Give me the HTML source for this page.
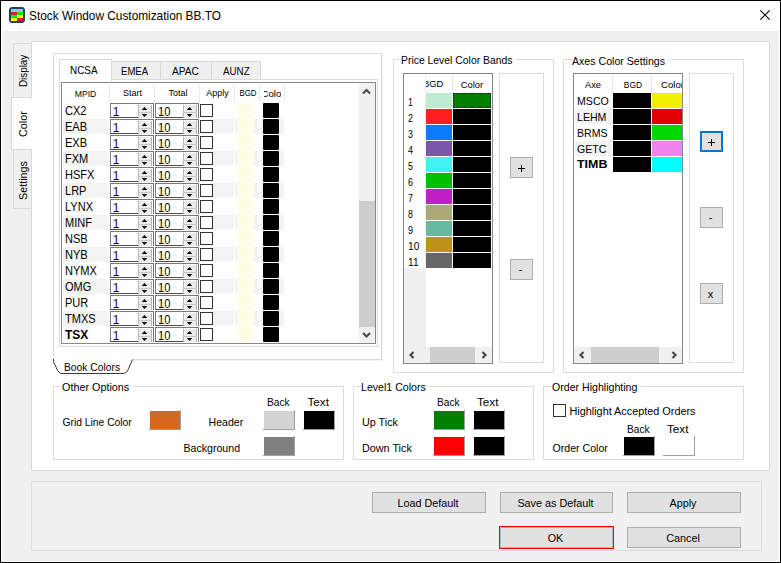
<!DOCTYPE html><html><head><meta charset="utf-8"><style>
*{margin:0;padding:0;box-sizing:border-box}
html,body{width:781px;height:563px;overflow:hidden}
body{position:relative;background:#f0f0f0;font-family:"Liberation Sans",sans-serif;color:#000}
.a{position:absolute}
.t{position:absolute;white-space:nowrap;line-height:1}
svg{position:absolute;left:0;top:0}
</style></head><body>
<div class="a" style="left:1px;top:1px;width:779px;height:30px;background:#fff"></div>
<div class="a" style="left:0px;top:0px;width:781px;height:563px;border:1px solid #000"></div>
<div class="a" style="left:1px;top:31px;width:1px;height:531px;background:#fff"></div>
<div class="a" style="left:779px;top:31px;width:1px;height:531px;background:#fff"></div>
<div class="a" style="left:1px;top:561px;width:779px;height:1px;background:#fff"></div>
<svg width="30" height="30" style="left:0;top:0">
<rect x="9.5" y="7.5" width="15" height="15" rx="2.5" fill="#223f5f" stroke="#223f5f"/>
<rect x="11" y="9" width="12" height="3" fill="#84cde6"/>
<rect x="11" y="12" width="6" height="3" fill="#d42020"/><rect x="17" y="12" width="6" height="3" fill="#00f000"/>
<rect x="11" y="15" width="6" height="3" fill="#00f000"/><rect x="17" y="15" width="6" height="3" fill="#ffff00"/>
<rect x="11" y="18" width="6" height="3" fill="#ffff00"/><rect x="17" y="18" width="6" height="3" fill="#d42020"/>
</svg>
<div class="t" style="left:28.8px;top:9.93px;font-size:12.6px;;transform-origin:0 0;transform:scaleX(0.94)">Stock Window Customization BB.TO</div>
<svg width="781" height="40" style="left:0;top:0"><path d="M760.3 10.3 L769.7 19.7 M769.7 10.3 L760.3 19.7" stroke="#000" stroke-width="1.05"/></svg>
<div class="a" style="left:31px;top:41px;width:739px;height:430px;background:#fff;border:1px solid #d9d9d9"></div>
<div class="a" style="left:13px;top:43px;width:19px;height:55px;background:#f0f0f0;border:1px solid #d9d9d9"></div>
<div class="a" style="left:13px;top:149px;width:19px;height:60px;background:#f0f0f0;border:1px solid #d9d9d9"></div>
<div class="a" style="left:11px;top:97px;width:21px;height:53px;background:#fff;border:1px solid #d9d9d9;border-right:none"></div>
<div class="a" style="left:31px;top:98px;width:1px;height:51px;background:#fff"></div>
<div class="t" style="left:17.83px;top:87.3px;font-size:10.8px;transform-origin:0 0;transform:rotate(-90deg) scaleX(0.91)">Display</div>
<div class="t" style="left:17.83px;top:137px;font-size:10.8px;transform-origin:0 0;transform:rotate(-90deg) scaleX(1)">Color</div>
<div class="t" style="left:17.83px;top:200px;font-size:10.8px;transform-origin:0 0;transform:rotate(-90deg) scaleX(1.0)">Settings</div>
<div class="a" style="left:53px;top:53px;width:329px;height:307px;background:#fff;border:1px solid #d9d9d9"></div>
<div class="a" style="left:382px;top:54px;width:1px;height:307px;background:#f4f4f4"></div>
<div class="a" style="left:54px;top:360px;width:329px;height:1px;background:#f4f4f4"></div>
<div class="a" style="left:54px;top:359px;width:78px;height:3px;background:#fff"></div>
<svg width="781" height="563" style="left:0;top:0"><path d="M53.5 359 L53.5 361.5 L57.5 370.5 Q59 373.5 62 373.5 L123.5 373.5 Q126.5 373.5 128 370 L132.5 359.5" fill="#fff" stroke="#3a3a3a" stroke-width="1"/></svg>
<div class="t" style="left:64px;top:363.28px;font-size:10.3px;">Book Colors</div>
<div class="a" style="left:59px;top:79px;width:319px;height:268px;background:#fff;border:1px solid #d9d9d9"></div>
<div class="a" style="left:111px;top:61px;width:50px;height:19px;background:#f0f0f0;border:1px solid #d9d9d9"></div>
<div class="a" style="left:160px;top:61px;width:52px;height:19px;background:#f0f0f0;border:1px solid #d9d9d9"></div>
<div class="a" style="left:211px;top:61px;width:50px;height:19px;background:#f0f0f0;border:1px solid #d9d9d9"></div>
<div class="a" style="left:59px;top:59px;width:53px;height:22px;background:#fff;border:1px solid #d9d9d9;border-bottom:none"></div>
<div class="t" style="left:70px;top:64.69px;font-size:11px;;transform-origin:0 0;transform:scaleX(0.9)">NCSA</div>
<div class="t" style="left:121px;top:65.69px;font-size:11px;;transform-origin:0 0;transform:scaleX(0.87)">EMEA</div>
<div class="t" style="left:172px;top:65.69px;font-size:11px;;transform-origin:0 0;transform:scaleX(0.92)">APAC</div>
<div class="t" style="left:223px;top:65.69px;font-size:11px;;transform-origin:0 0;transform:scaleX(0.89)">AUNZ</div>
<div class="a" style="left:61px;top:82px;width:315px;height:262px;background:#fff;border:1px solid #828790"></div>
<div class="a" style="left:109px;top:84px;width:1px;height:18px;background:#e8e8e8"></div>
<div class="a" style="left:154px;top:84px;width:1px;height:18px;background:#e8e8e8"></div>
<div class="a" style="left:199px;top:84px;width:1px;height:18px;background:#e8e8e8"></div>
<div class="a" style="left:234px;top:84px;width:1px;height:18px;background:#e8e8e8"></div>
<div class="a" style="left:259px;top:84px;width:1px;height:18px;background:#e8e8e8"></div>
<div class="a" style="left:284px;top:84px;width:1px;height:18px;background:#e8e8e8"></div>
<div class="t" style="left:-14.5px;width:200px;text-align:center;top:89.72px;font-size:8.6px;">MPID</div>
<div class="t" style="left:32.5px;width:200px;text-align:center;top:89.38px;font-size:9px;">Start</div>
<div class="t" style="left:78px;width:200px;text-align:center;top:89.38px;font-size:9px;">Total</div>
<div class="t" style="left:117.5px;width:200px;text-align:center;top:89.38px;font-size:9px;">Apply</div>
<div class="t" style="left:147.5px;width:200px;text-align:center;top:89.38px;font-size:9px;transform:scaleX(0.88)">BGD</div>
<div class="a" style="left:264px;top:84px;width:17px;height:17px;overflow:hidden"><div class="t" style="left:-13px;width:44px;text-align:center;top:4.8px;font-size:9.6px">Color</div></div>
<div class="t" style="left:65px;top:104.84px;font-size:12px;;transform-origin:0 0;transform:scaleX(0.92)">CX2</div>
<div class="a" style="left:110px;top:103px;width:44px;height:15px;background:#fff;border:1px solid #7a7a7a;border-bottom:none"></div>
<div class="a" style="left:110px;top:117px;width:28px;height:1px;background:#4a4a4a"></div>
<div class="a" style="left:138px;top:105px;width:14px;height:13px;background:#ebebeb;border-left:1px solid #b5b5b5;border-right:1px solid #b5b5b5"></div>
<div class="a" style="left:138px;top:112px;width:14px;height:1px;background:#c6c6c6"></div>
<svg width="15" height="15" style="left:138px;top:103px"><path d="M3.8 7 L6.5 3.9 L9.2 7Z M3.8 11 L6.5 14.1 L9.2 11Z" fill="#000"/></svg>
<div class="t" style="left:113px;top:105.84px;font-size:12px;;transform-origin:0 0;transform:scaleX(0.93)">1</div>
<div class="a" style="left:155px;top:103px;width:44px;height:15px;background:#fff;border:1px solid #7a7a7a;border-bottom:none"></div>
<div class="a" style="left:155px;top:117px;width:28px;height:1px;background:#4a4a4a"></div>
<div class="a" style="left:183px;top:105px;width:14px;height:13px;background:#ebebeb;border-left:1px solid #b5b5b5;border-right:1px solid #b5b5b5"></div>
<div class="a" style="left:183px;top:112px;width:14px;height:1px;background:#c6c6c6"></div>
<svg width="15" height="15" style="left:183px;top:103px"><path d="M3.8 7 L6.5 3.9 L9.2 7Z M3.8 11 L6.5 14.1 L9.2 11Z" fill="#000"/></svg>
<div class="t" style="left:158px;top:105.84px;font-size:12px;;transform-origin:0 0;transform:scaleX(0.93)">10</div>
<div class="a" style="left:200px;top:104px;width:13px;height:13px;background:#fff;border:1px solid #333"></div>
<div class="a" style="left:238px;top:103px;width:16px;height:15px;background:#fffde6"></div>
<div class="a" style="left:263px;top:103px;width:16px;height:15px;background:#000;border-radius:1px"></div>
<div class="a" style="left:63px;top:119px;width:46px;height:15px;background:#f3f3f3"></div>
<div class="a" style="left:213px;top:119px;width:21px;height:15px;background:#f3f3f3"></div>
<div class="a" style="left:235px;top:119px;width:24px;height:15px;background:#f3f3f3"></div>
<div class="a" style="left:260px;top:119px;width:24px;height:15px;background:#f3f3f3"></div>
<div class="t" style="left:65px;top:120.84px;font-size:12px;;transform-origin:0 0;transform:scaleX(0.92)">EAB</div>
<div class="a" style="left:110px;top:119px;width:44px;height:15px;background:#fff;border:1px solid #7a7a7a;border-bottom:none"></div>
<div class="a" style="left:110px;top:133px;width:28px;height:1px;background:#4a4a4a"></div>
<div class="a" style="left:138px;top:121px;width:14px;height:13px;background:#ebebeb;border-left:1px solid #b5b5b5;border-right:1px solid #b5b5b5"></div>
<div class="a" style="left:138px;top:128px;width:14px;height:1px;background:#c6c6c6"></div>
<svg width="15" height="15" style="left:138px;top:119px"><path d="M3.8 7 L6.5 3.9 L9.2 7Z M3.8 11 L6.5 14.1 L9.2 11Z" fill="#000"/></svg>
<div class="t" style="left:113px;top:121.84px;font-size:12px;;transform-origin:0 0;transform:scaleX(0.93)">1</div>
<div class="a" style="left:155px;top:119px;width:44px;height:15px;background:#fff;border:1px solid #7a7a7a;border-bottom:none"></div>
<div class="a" style="left:155px;top:133px;width:28px;height:1px;background:#4a4a4a"></div>
<div class="a" style="left:183px;top:121px;width:14px;height:13px;background:#ebebeb;border-left:1px solid #b5b5b5;border-right:1px solid #b5b5b5"></div>
<div class="a" style="left:183px;top:128px;width:14px;height:1px;background:#c6c6c6"></div>
<svg width="15" height="15" style="left:183px;top:119px"><path d="M3.8 7 L6.5 3.9 L9.2 7Z M3.8 11 L6.5 14.1 L9.2 11Z" fill="#000"/></svg>
<div class="t" style="left:158px;top:121.84px;font-size:12px;;transform-origin:0 0;transform:scaleX(0.93)">10</div>
<div class="a" style="left:200px;top:120px;width:13px;height:13px;background:#fff;border:1px solid #333"></div>
<div class="a" style="left:238px;top:119px;width:16px;height:15px;background:#fffde6"></div>
<div class="a" style="left:263px;top:119px;width:16px;height:15px;background:#000;border-radius:1px"></div>
<div class="t" style="left:65px;top:136.84px;font-size:12px;;transform-origin:0 0;transform:scaleX(0.92)">EXB</div>
<div class="a" style="left:110px;top:135px;width:44px;height:15px;background:#fff;border:1px solid #7a7a7a;border-bottom:none"></div>
<div class="a" style="left:110px;top:149px;width:28px;height:1px;background:#4a4a4a"></div>
<div class="a" style="left:138px;top:137px;width:14px;height:13px;background:#ebebeb;border-left:1px solid #b5b5b5;border-right:1px solid #b5b5b5"></div>
<div class="a" style="left:138px;top:144px;width:14px;height:1px;background:#c6c6c6"></div>
<svg width="15" height="15" style="left:138px;top:135px"><path d="M3.8 7 L6.5 3.9 L9.2 7Z M3.8 11 L6.5 14.1 L9.2 11Z" fill="#000"/></svg>
<div class="t" style="left:113px;top:137.84px;font-size:12px;;transform-origin:0 0;transform:scaleX(0.93)">1</div>
<div class="a" style="left:155px;top:135px;width:44px;height:15px;background:#fff;border:1px solid #7a7a7a;border-bottom:none"></div>
<div class="a" style="left:155px;top:149px;width:28px;height:1px;background:#4a4a4a"></div>
<div class="a" style="left:183px;top:137px;width:14px;height:13px;background:#ebebeb;border-left:1px solid #b5b5b5;border-right:1px solid #b5b5b5"></div>
<div class="a" style="left:183px;top:144px;width:14px;height:1px;background:#c6c6c6"></div>
<svg width="15" height="15" style="left:183px;top:135px"><path d="M3.8 7 L6.5 3.9 L9.2 7Z M3.8 11 L6.5 14.1 L9.2 11Z" fill="#000"/></svg>
<div class="t" style="left:158px;top:137.84px;font-size:12px;;transform-origin:0 0;transform:scaleX(0.93)">10</div>
<div class="a" style="left:200px;top:136px;width:13px;height:13px;background:#fff;border:1px solid #333"></div>
<div class="a" style="left:238px;top:135px;width:16px;height:15px;background:#fffde6"></div>
<div class="a" style="left:263px;top:135px;width:16px;height:15px;background:#000;border-radius:1px"></div>
<div class="a" style="left:63px;top:151px;width:46px;height:15px;background:#f3f3f3"></div>
<div class="a" style="left:213px;top:151px;width:21px;height:15px;background:#f3f3f3"></div>
<div class="a" style="left:235px;top:151px;width:24px;height:15px;background:#f3f3f3"></div>
<div class="a" style="left:260px;top:151px;width:24px;height:15px;background:#f3f3f3"></div>
<div class="t" style="left:65px;top:152.84px;font-size:12px;;transform-origin:0 0;transform:scaleX(0.92)">FXM</div>
<div class="a" style="left:110px;top:151px;width:44px;height:15px;background:#fff;border:1px solid #7a7a7a;border-bottom:none"></div>
<div class="a" style="left:110px;top:165px;width:28px;height:1px;background:#4a4a4a"></div>
<div class="a" style="left:138px;top:153px;width:14px;height:13px;background:#ebebeb;border-left:1px solid #b5b5b5;border-right:1px solid #b5b5b5"></div>
<div class="a" style="left:138px;top:160px;width:14px;height:1px;background:#c6c6c6"></div>
<svg width="15" height="15" style="left:138px;top:151px"><path d="M3.8 7 L6.5 3.9 L9.2 7Z M3.8 11 L6.5 14.1 L9.2 11Z" fill="#000"/></svg>
<div class="t" style="left:113px;top:153.84px;font-size:12px;;transform-origin:0 0;transform:scaleX(0.93)">1</div>
<div class="a" style="left:155px;top:151px;width:44px;height:15px;background:#fff;border:1px solid #7a7a7a;border-bottom:none"></div>
<div class="a" style="left:155px;top:165px;width:28px;height:1px;background:#4a4a4a"></div>
<div class="a" style="left:183px;top:153px;width:14px;height:13px;background:#ebebeb;border-left:1px solid #b5b5b5;border-right:1px solid #b5b5b5"></div>
<div class="a" style="left:183px;top:160px;width:14px;height:1px;background:#c6c6c6"></div>
<svg width="15" height="15" style="left:183px;top:151px"><path d="M3.8 7 L6.5 3.9 L9.2 7Z M3.8 11 L6.5 14.1 L9.2 11Z" fill="#000"/></svg>
<div class="t" style="left:158px;top:153.84px;font-size:12px;;transform-origin:0 0;transform:scaleX(0.93)">10</div>
<div class="a" style="left:200px;top:152px;width:13px;height:13px;background:#fff;border:1px solid #333"></div>
<div class="a" style="left:238px;top:151px;width:16px;height:15px;background:#fffde6"></div>
<div class="a" style="left:263px;top:151px;width:16px;height:15px;background:#000;border-radius:1px"></div>
<div class="t" style="left:65px;top:168.84px;font-size:12px;;transform-origin:0 0;transform:scaleX(0.92)">HSFX</div>
<div class="a" style="left:110px;top:167px;width:44px;height:15px;background:#fff;border:1px solid #7a7a7a;border-bottom:none"></div>
<div class="a" style="left:110px;top:181px;width:28px;height:1px;background:#4a4a4a"></div>
<div class="a" style="left:138px;top:169px;width:14px;height:13px;background:#ebebeb;border-left:1px solid #b5b5b5;border-right:1px solid #b5b5b5"></div>
<div class="a" style="left:138px;top:176px;width:14px;height:1px;background:#c6c6c6"></div>
<svg width="15" height="15" style="left:138px;top:167px"><path d="M3.8 7 L6.5 3.9 L9.2 7Z M3.8 11 L6.5 14.1 L9.2 11Z" fill="#000"/></svg>
<div class="t" style="left:113px;top:169.84px;font-size:12px;;transform-origin:0 0;transform:scaleX(0.93)">1</div>
<div class="a" style="left:155px;top:167px;width:44px;height:15px;background:#fff;border:1px solid #7a7a7a;border-bottom:none"></div>
<div class="a" style="left:155px;top:181px;width:28px;height:1px;background:#4a4a4a"></div>
<div class="a" style="left:183px;top:169px;width:14px;height:13px;background:#ebebeb;border-left:1px solid #b5b5b5;border-right:1px solid #b5b5b5"></div>
<div class="a" style="left:183px;top:176px;width:14px;height:1px;background:#c6c6c6"></div>
<svg width="15" height="15" style="left:183px;top:167px"><path d="M3.8 7 L6.5 3.9 L9.2 7Z M3.8 11 L6.5 14.1 L9.2 11Z" fill="#000"/></svg>
<div class="t" style="left:158px;top:169.84px;font-size:12px;;transform-origin:0 0;transform:scaleX(0.93)">10</div>
<div class="a" style="left:200px;top:168px;width:13px;height:13px;background:#fff;border:1px solid #333"></div>
<div class="a" style="left:238px;top:167px;width:16px;height:15px;background:#fffde6"></div>
<div class="a" style="left:263px;top:167px;width:16px;height:15px;background:#000;border-radius:1px"></div>
<div class="a" style="left:63px;top:183px;width:46px;height:15px;background:#f3f3f3"></div>
<div class="a" style="left:213px;top:183px;width:21px;height:15px;background:#f3f3f3"></div>
<div class="a" style="left:235px;top:183px;width:24px;height:15px;background:#f3f3f3"></div>
<div class="a" style="left:260px;top:183px;width:24px;height:15px;background:#f3f3f3"></div>
<div class="t" style="left:65px;top:184.84px;font-size:12px;;transform-origin:0 0;transform:scaleX(0.92)">LRP</div>
<div class="a" style="left:110px;top:183px;width:44px;height:15px;background:#fff;border:1px solid #7a7a7a;border-bottom:none"></div>
<div class="a" style="left:110px;top:197px;width:28px;height:1px;background:#4a4a4a"></div>
<div class="a" style="left:138px;top:185px;width:14px;height:13px;background:#ebebeb;border-left:1px solid #b5b5b5;border-right:1px solid #b5b5b5"></div>
<div class="a" style="left:138px;top:192px;width:14px;height:1px;background:#c6c6c6"></div>
<svg width="15" height="15" style="left:138px;top:183px"><path d="M3.8 7 L6.5 3.9 L9.2 7Z M3.8 11 L6.5 14.1 L9.2 11Z" fill="#000"/></svg>
<div class="t" style="left:113px;top:185.84px;font-size:12px;;transform-origin:0 0;transform:scaleX(0.93)">1</div>
<div class="a" style="left:155px;top:183px;width:44px;height:15px;background:#fff;border:1px solid #7a7a7a;border-bottom:none"></div>
<div class="a" style="left:155px;top:197px;width:28px;height:1px;background:#4a4a4a"></div>
<div class="a" style="left:183px;top:185px;width:14px;height:13px;background:#ebebeb;border-left:1px solid #b5b5b5;border-right:1px solid #b5b5b5"></div>
<div class="a" style="left:183px;top:192px;width:14px;height:1px;background:#c6c6c6"></div>
<svg width="15" height="15" style="left:183px;top:183px"><path d="M3.8 7 L6.5 3.9 L9.2 7Z M3.8 11 L6.5 14.1 L9.2 11Z" fill="#000"/></svg>
<div class="t" style="left:158px;top:185.84px;font-size:12px;;transform-origin:0 0;transform:scaleX(0.93)">10</div>
<div class="a" style="left:200px;top:184px;width:13px;height:13px;background:#fff;border:1px solid #333"></div>
<div class="a" style="left:238px;top:183px;width:16px;height:15px;background:#fffde6"></div>
<div class="a" style="left:263px;top:183px;width:16px;height:15px;background:#000;border-radius:1px"></div>
<div class="t" style="left:65px;top:200.84px;font-size:12px;;transform-origin:0 0;transform:scaleX(0.92)">LYNX</div>
<div class="a" style="left:110px;top:199px;width:44px;height:15px;background:#fff;border:1px solid #7a7a7a;border-bottom:none"></div>
<div class="a" style="left:110px;top:213px;width:28px;height:1px;background:#4a4a4a"></div>
<div class="a" style="left:138px;top:201px;width:14px;height:13px;background:#ebebeb;border-left:1px solid #b5b5b5;border-right:1px solid #b5b5b5"></div>
<div class="a" style="left:138px;top:208px;width:14px;height:1px;background:#c6c6c6"></div>
<svg width="15" height="15" style="left:138px;top:199px"><path d="M3.8 7 L6.5 3.9 L9.2 7Z M3.8 11 L6.5 14.1 L9.2 11Z" fill="#000"/></svg>
<div class="t" style="left:113px;top:201.84px;font-size:12px;;transform-origin:0 0;transform:scaleX(0.93)">1</div>
<div class="a" style="left:155px;top:199px;width:44px;height:15px;background:#fff;border:1px solid #7a7a7a;border-bottom:none"></div>
<div class="a" style="left:155px;top:213px;width:28px;height:1px;background:#4a4a4a"></div>
<div class="a" style="left:183px;top:201px;width:14px;height:13px;background:#ebebeb;border-left:1px solid #b5b5b5;border-right:1px solid #b5b5b5"></div>
<div class="a" style="left:183px;top:208px;width:14px;height:1px;background:#c6c6c6"></div>
<svg width="15" height="15" style="left:183px;top:199px"><path d="M3.8 7 L6.5 3.9 L9.2 7Z M3.8 11 L6.5 14.1 L9.2 11Z" fill="#000"/></svg>
<div class="t" style="left:158px;top:201.84px;font-size:12px;;transform-origin:0 0;transform:scaleX(0.93)">10</div>
<div class="a" style="left:200px;top:200px;width:13px;height:13px;background:#fff;border:1px solid #333"></div>
<div class="a" style="left:238px;top:199px;width:16px;height:15px;background:#fffde6"></div>
<div class="a" style="left:263px;top:199px;width:16px;height:15px;background:#000;border-radius:1px"></div>
<div class="a" style="left:63px;top:215px;width:46px;height:15px;background:#f3f3f3"></div>
<div class="a" style="left:213px;top:215px;width:21px;height:15px;background:#f3f3f3"></div>
<div class="a" style="left:235px;top:215px;width:24px;height:15px;background:#f3f3f3"></div>
<div class="a" style="left:260px;top:215px;width:24px;height:15px;background:#f3f3f3"></div>
<div class="t" style="left:65px;top:216.84px;font-size:12px;;transform-origin:0 0;transform:scaleX(0.92)">MINF</div>
<div class="a" style="left:110px;top:215px;width:44px;height:15px;background:#fff;border:1px solid #7a7a7a;border-bottom:none"></div>
<div class="a" style="left:110px;top:229px;width:28px;height:1px;background:#4a4a4a"></div>
<div class="a" style="left:138px;top:217px;width:14px;height:13px;background:#ebebeb;border-left:1px solid #b5b5b5;border-right:1px solid #b5b5b5"></div>
<div class="a" style="left:138px;top:224px;width:14px;height:1px;background:#c6c6c6"></div>
<svg width="15" height="15" style="left:138px;top:215px"><path d="M3.8 7 L6.5 3.9 L9.2 7Z M3.8 11 L6.5 14.1 L9.2 11Z" fill="#000"/></svg>
<div class="t" style="left:113px;top:217.84px;font-size:12px;;transform-origin:0 0;transform:scaleX(0.93)">1</div>
<div class="a" style="left:155px;top:215px;width:44px;height:15px;background:#fff;border:1px solid #7a7a7a;border-bottom:none"></div>
<div class="a" style="left:155px;top:229px;width:28px;height:1px;background:#4a4a4a"></div>
<div class="a" style="left:183px;top:217px;width:14px;height:13px;background:#ebebeb;border-left:1px solid #b5b5b5;border-right:1px solid #b5b5b5"></div>
<div class="a" style="left:183px;top:224px;width:14px;height:1px;background:#c6c6c6"></div>
<svg width="15" height="15" style="left:183px;top:215px"><path d="M3.8 7 L6.5 3.9 L9.2 7Z M3.8 11 L6.5 14.1 L9.2 11Z" fill="#000"/></svg>
<div class="t" style="left:158px;top:217.84px;font-size:12px;;transform-origin:0 0;transform:scaleX(0.93)">10</div>
<div class="a" style="left:200px;top:216px;width:13px;height:13px;background:#fff;border:1px solid #333"></div>
<div class="a" style="left:238px;top:215px;width:16px;height:15px;background:#fffde6"></div>
<div class="a" style="left:263px;top:215px;width:16px;height:15px;background:#000;border-radius:1px"></div>
<div class="t" style="left:65px;top:232.84px;font-size:12px;;transform-origin:0 0;transform:scaleX(0.92)">NSB</div>
<div class="a" style="left:110px;top:231px;width:44px;height:15px;background:#fff;border:1px solid #7a7a7a;border-bottom:none"></div>
<div class="a" style="left:110px;top:245px;width:28px;height:1px;background:#4a4a4a"></div>
<div class="a" style="left:138px;top:233px;width:14px;height:13px;background:#ebebeb;border-left:1px solid #b5b5b5;border-right:1px solid #b5b5b5"></div>
<div class="a" style="left:138px;top:240px;width:14px;height:1px;background:#c6c6c6"></div>
<svg width="15" height="15" style="left:138px;top:231px"><path d="M3.8 7 L6.5 3.9 L9.2 7Z M3.8 11 L6.5 14.1 L9.2 11Z" fill="#000"/></svg>
<div class="t" style="left:113px;top:233.84px;font-size:12px;;transform-origin:0 0;transform:scaleX(0.93)">1</div>
<div class="a" style="left:155px;top:231px;width:44px;height:15px;background:#fff;border:1px solid #7a7a7a;border-bottom:none"></div>
<div class="a" style="left:155px;top:245px;width:28px;height:1px;background:#4a4a4a"></div>
<div class="a" style="left:183px;top:233px;width:14px;height:13px;background:#ebebeb;border-left:1px solid #b5b5b5;border-right:1px solid #b5b5b5"></div>
<div class="a" style="left:183px;top:240px;width:14px;height:1px;background:#c6c6c6"></div>
<svg width="15" height="15" style="left:183px;top:231px"><path d="M3.8 7 L6.5 3.9 L9.2 7Z M3.8 11 L6.5 14.1 L9.2 11Z" fill="#000"/></svg>
<div class="t" style="left:158px;top:233.84px;font-size:12px;;transform-origin:0 0;transform:scaleX(0.93)">10</div>
<div class="a" style="left:200px;top:232px;width:13px;height:13px;background:#fff;border:1px solid #333"></div>
<div class="a" style="left:238px;top:231px;width:16px;height:15px;background:#fffde6"></div>
<div class="a" style="left:263px;top:231px;width:16px;height:15px;background:#000;border-radius:1px"></div>
<div class="a" style="left:63px;top:247px;width:46px;height:15px;background:#f3f3f3"></div>
<div class="a" style="left:213px;top:247px;width:21px;height:15px;background:#f3f3f3"></div>
<div class="a" style="left:235px;top:247px;width:24px;height:15px;background:#f3f3f3"></div>
<div class="a" style="left:260px;top:247px;width:24px;height:15px;background:#f3f3f3"></div>
<div class="t" style="left:65px;top:248.84px;font-size:12px;;transform-origin:0 0;transform:scaleX(0.92)">NYB</div>
<div class="a" style="left:110px;top:247px;width:44px;height:15px;background:#fff;border:1px solid #7a7a7a;border-bottom:none"></div>
<div class="a" style="left:110px;top:261px;width:28px;height:1px;background:#4a4a4a"></div>
<div class="a" style="left:138px;top:249px;width:14px;height:13px;background:#ebebeb;border-left:1px solid #b5b5b5;border-right:1px solid #b5b5b5"></div>
<div class="a" style="left:138px;top:256px;width:14px;height:1px;background:#c6c6c6"></div>
<svg width="15" height="15" style="left:138px;top:247px"><path d="M3.8 7 L6.5 3.9 L9.2 7Z M3.8 11 L6.5 14.1 L9.2 11Z" fill="#000"/></svg>
<div class="t" style="left:113px;top:249.84px;font-size:12px;;transform-origin:0 0;transform:scaleX(0.93)">1</div>
<div class="a" style="left:155px;top:247px;width:44px;height:15px;background:#fff;border:1px solid #7a7a7a;border-bottom:none"></div>
<div class="a" style="left:155px;top:261px;width:28px;height:1px;background:#4a4a4a"></div>
<div class="a" style="left:183px;top:249px;width:14px;height:13px;background:#ebebeb;border-left:1px solid #b5b5b5;border-right:1px solid #b5b5b5"></div>
<div class="a" style="left:183px;top:256px;width:14px;height:1px;background:#c6c6c6"></div>
<svg width="15" height="15" style="left:183px;top:247px"><path d="M3.8 7 L6.5 3.9 L9.2 7Z M3.8 11 L6.5 14.1 L9.2 11Z" fill="#000"/></svg>
<div class="t" style="left:158px;top:249.84px;font-size:12px;;transform-origin:0 0;transform:scaleX(0.93)">10</div>
<div class="a" style="left:200px;top:248px;width:13px;height:13px;background:#fff;border:1px solid #333"></div>
<div class="a" style="left:238px;top:247px;width:16px;height:15px;background:#fffde6"></div>
<div class="a" style="left:263px;top:247px;width:16px;height:15px;background:#000;border-radius:1px"></div>
<div class="t" style="left:65px;top:264.84px;font-size:12px;;transform-origin:0 0;transform:scaleX(0.92)">NYMX</div>
<div class="a" style="left:110px;top:263px;width:44px;height:15px;background:#fff;border:1px solid #7a7a7a;border-bottom:none"></div>
<div class="a" style="left:110px;top:277px;width:28px;height:1px;background:#4a4a4a"></div>
<div class="a" style="left:138px;top:265px;width:14px;height:13px;background:#ebebeb;border-left:1px solid #b5b5b5;border-right:1px solid #b5b5b5"></div>
<div class="a" style="left:138px;top:272px;width:14px;height:1px;background:#c6c6c6"></div>
<svg width="15" height="15" style="left:138px;top:263px"><path d="M3.8 7 L6.5 3.9 L9.2 7Z M3.8 11 L6.5 14.1 L9.2 11Z" fill="#000"/></svg>
<div class="t" style="left:113px;top:265.84px;font-size:12px;;transform-origin:0 0;transform:scaleX(0.93)">1</div>
<div class="a" style="left:155px;top:263px;width:44px;height:15px;background:#fff;border:1px solid #7a7a7a;border-bottom:none"></div>
<div class="a" style="left:155px;top:277px;width:28px;height:1px;background:#4a4a4a"></div>
<div class="a" style="left:183px;top:265px;width:14px;height:13px;background:#ebebeb;border-left:1px solid #b5b5b5;border-right:1px solid #b5b5b5"></div>
<div class="a" style="left:183px;top:272px;width:14px;height:1px;background:#c6c6c6"></div>
<svg width="15" height="15" style="left:183px;top:263px"><path d="M3.8 7 L6.5 3.9 L9.2 7Z M3.8 11 L6.5 14.1 L9.2 11Z" fill="#000"/></svg>
<div class="t" style="left:158px;top:265.84px;font-size:12px;;transform-origin:0 0;transform:scaleX(0.93)">10</div>
<div class="a" style="left:200px;top:264px;width:13px;height:13px;background:#fff;border:1px solid #333"></div>
<div class="a" style="left:238px;top:263px;width:16px;height:15px;background:#fffde6"></div>
<div class="a" style="left:263px;top:263px;width:16px;height:15px;background:#000;border-radius:1px"></div>
<div class="a" style="left:63px;top:279px;width:46px;height:15px;background:#f3f3f3"></div>
<div class="a" style="left:213px;top:279px;width:21px;height:15px;background:#f3f3f3"></div>
<div class="a" style="left:235px;top:279px;width:24px;height:15px;background:#f3f3f3"></div>
<div class="a" style="left:260px;top:279px;width:24px;height:15px;background:#f3f3f3"></div>
<div class="t" style="left:65px;top:280.84px;font-size:12px;;transform-origin:0 0;transform:scaleX(0.92)">OMG</div>
<div class="a" style="left:110px;top:279px;width:44px;height:15px;background:#fff;border:1px solid #7a7a7a;border-bottom:none"></div>
<div class="a" style="left:110px;top:293px;width:28px;height:1px;background:#4a4a4a"></div>
<div class="a" style="left:138px;top:281px;width:14px;height:13px;background:#ebebeb;border-left:1px solid #b5b5b5;border-right:1px solid #b5b5b5"></div>
<div class="a" style="left:138px;top:288px;width:14px;height:1px;background:#c6c6c6"></div>
<svg width="15" height="15" style="left:138px;top:279px"><path d="M3.8 7 L6.5 3.9 L9.2 7Z M3.8 11 L6.5 14.1 L9.2 11Z" fill="#000"/></svg>
<div class="t" style="left:113px;top:281.84px;font-size:12px;;transform-origin:0 0;transform:scaleX(0.93)">1</div>
<div class="a" style="left:155px;top:279px;width:44px;height:15px;background:#fff;border:1px solid #7a7a7a;border-bottom:none"></div>
<div class="a" style="left:155px;top:293px;width:28px;height:1px;background:#4a4a4a"></div>
<div class="a" style="left:183px;top:281px;width:14px;height:13px;background:#ebebeb;border-left:1px solid #b5b5b5;border-right:1px solid #b5b5b5"></div>
<div class="a" style="left:183px;top:288px;width:14px;height:1px;background:#c6c6c6"></div>
<svg width="15" height="15" style="left:183px;top:279px"><path d="M3.8 7 L6.5 3.9 L9.2 7Z M3.8 11 L6.5 14.1 L9.2 11Z" fill="#000"/></svg>
<div class="t" style="left:158px;top:281.84px;font-size:12px;;transform-origin:0 0;transform:scaleX(0.93)">10</div>
<div class="a" style="left:200px;top:280px;width:13px;height:13px;background:#fff;border:1px solid #333"></div>
<div class="a" style="left:238px;top:279px;width:16px;height:15px;background:#fffde6"></div>
<div class="a" style="left:263px;top:279px;width:16px;height:15px;background:#000;border-radius:1px"></div>
<div class="t" style="left:65px;top:296.84px;font-size:12px;;transform-origin:0 0;transform:scaleX(0.92)">PUR</div>
<div class="a" style="left:110px;top:295px;width:44px;height:15px;background:#fff;border:1px solid #7a7a7a;border-bottom:none"></div>
<div class="a" style="left:110px;top:309px;width:28px;height:1px;background:#4a4a4a"></div>
<div class="a" style="left:138px;top:297px;width:14px;height:13px;background:#ebebeb;border-left:1px solid #b5b5b5;border-right:1px solid #b5b5b5"></div>
<div class="a" style="left:138px;top:304px;width:14px;height:1px;background:#c6c6c6"></div>
<svg width="15" height="15" style="left:138px;top:295px"><path d="M3.8 7 L6.5 3.9 L9.2 7Z M3.8 11 L6.5 14.1 L9.2 11Z" fill="#000"/></svg>
<div class="t" style="left:113px;top:297.84px;font-size:12px;;transform-origin:0 0;transform:scaleX(0.93)">1</div>
<div class="a" style="left:155px;top:295px;width:44px;height:15px;background:#fff;border:1px solid #7a7a7a;border-bottom:none"></div>
<div class="a" style="left:155px;top:309px;width:28px;height:1px;background:#4a4a4a"></div>
<div class="a" style="left:183px;top:297px;width:14px;height:13px;background:#ebebeb;border-left:1px solid #b5b5b5;border-right:1px solid #b5b5b5"></div>
<div class="a" style="left:183px;top:304px;width:14px;height:1px;background:#c6c6c6"></div>
<svg width="15" height="15" style="left:183px;top:295px"><path d="M3.8 7 L6.5 3.9 L9.2 7Z M3.8 11 L6.5 14.1 L9.2 11Z" fill="#000"/></svg>
<div class="t" style="left:158px;top:297.84px;font-size:12px;;transform-origin:0 0;transform:scaleX(0.93)">10</div>
<div class="a" style="left:200px;top:296px;width:13px;height:13px;background:#fff;border:1px solid #333"></div>
<div class="a" style="left:238px;top:295px;width:16px;height:15px;background:#fffde6"></div>
<div class="a" style="left:263px;top:295px;width:16px;height:15px;background:#000;border-radius:1px"></div>
<div class="a" style="left:63px;top:311px;width:46px;height:15px;background:#f3f3f3"></div>
<div class="a" style="left:213px;top:311px;width:21px;height:15px;background:#f3f3f3"></div>
<div class="a" style="left:235px;top:311px;width:24px;height:15px;background:#f3f3f3"></div>
<div class="a" style="left:260px;top:311px;width:24px;height:15px;background:#f3f3f3"></div>
<div class="t" style="left:65px;top:312.84px;font-size:12px;;transform-origin:0 0;transform:scaleX(0.92)">TMXS</div>
<div class="a" style="left:110px;top:311px;width:44px;height:15px;background:#fff;border:1px solid #7a7a7a;border-bottom:none"></div>
<div class="a" style="left:110px;top:325px;width:28px;height:1px;background:#4a4a4a"></div>
<div class="a" style="left:138px;top:313px;width:14px;height:13px;background:#ebebeb;border-left:1px solid #b5b5b5;border-right:1px solid #b5b5b5"></div>
<div class="a" style="left:138px;top:320px;width:14px;height:1px;background:#c6c6c6"></div>
<svg width="15" height="15" style="left:138px;top:311px"><path d="M3.8 7 L6.5 3.9 L9.2 7Z M3.8 11 L6.5 14.1 L9.2 11Z" fill="#000"/></svg>
<div class="t" style="left:113px;top:313.84px;font-size:12px;;transform-origin:0 0;transform:scaleX(0.93)">1</div>
<div class="a" style="left:155px;top:311px;width:44px;height:15px;background:#fff;border:1px solid #7a7a7a;border-bottom:none"></div>
<div class="a" style="left:155px;top:325px;width:28px;height:1px;background:#4a4a4a"></div>
<div class="a" style="left:183px;top:313px;width:14px;height:13px;background:#ebebeb;border-left:1px solid #b5b5b5;border-right:1px solid #b5b5b5"></div>
<div class="a" style="left:183px;top:320px;width:14px;height:1px;background:#c6c6c6"></div>
<svg width="15" height="15" style="left:183px;top:311px"><path d="M3.8 7 L6.5 3.9 L9.2 7Z M3.8 11 L6.5 14.1 L9.2 11Z" fill="#000"/></svg>
<div class="t" style="left:158px;top:313.84px;font-size:12px;;transform-origin:0 0;transform:scaleX(0.93)">10</div>
<div class="a" style="left:200px;top:312px;width:13px;height:13px;background:#fff;border:1px solid #333"></div>
<div class="a" style="left:238px;top:311px;width:16px;height:15px;background:#fffde6"></div>
<div class="a" style="left:263px;top:311px;width:16px;height:15px;background:#000;border-radius:1px"></div>
<div class="t" style="left:65px;top:328.84px;font-size:12px;font-weight:bold;transform-origin:0 0;transform:scaleX(1.0)">TSX</div>
<div class="a" style="left:110px;top:327px;width:44px;height:15px;background:#fff;border:1px solid #7a7a7a;border-bottom:none"></div>
<div class="a" style="left:110px;top:341px;width:28px;height:1px;background:#4a4a4a"></div>
<div class="a" style="left:138px;top:329px;width:14px;height:13px;background:#ebebeb;border-left:1px solid #b5b5b5;border-right:1px solid #b5b5b5"></div>
<div class="a" style="left:138px;top:336px;width:14px;height:1px;background:#c6c6c6"></div>
<svg width="15" height="15" style="left:138px;top:327px"><path d="M3.8 7 L6.5 3.9 L9.2 7Z M3.8 11 L6.5 14.1 L9.2 11Z" fill="#000"/></svg>
<div class="t" style="left:113px;top:329.84px;font-size:12px;;transform-origin:0 0;transform:scaleX(0.93)">1</div>
<div class="a" style="left:155px;top:327px;width:44px;height:15px;background:#fff;border:1px solid #7a7a7a;border-bottom:none"></div>
<div class="a" style="left:155px;top:341px;width:28px;height:1px;background:#4a4a4a"></div>
<div class="a" style="left:183px;top:329px;width:14px;height:13px;background:#ebebeb;border-left:1px solid #b5b5b5;border-right:1px solid #b5b5b5"></div>
<div class="a" style="left:183px;top:336px;width:14px;height:1px;background:#c6c6c6"></div>
<svg width="15" height="15" style="left:183px;top:327px"><path d="M3.8 7 L6.5 3.9 L9.2 7Z M3.8 11 L6.5 14.1 L9.2 11Z" fill="#000"/></svg>
<div class="t" style="left:158px;top:329.84px;font-size:12px;;transform-origin:0 0;transform:scaleX(0.93)">10</div>
<div class="a" style="left:200px;top:328px;width:13px;height:13px;background:#fff;border:1px solid #333"></div>
<div class="a" style="left:238px;top:327px;width:16px;height:15px;background:#fffde6"></div>
<div class="a" style="left:263px;top:327px;width:16px;height:15px;background:#000;border-radius:1px"></div>
<div class="a" style="left:359px;top:83px;width:16px;height:260px;background:#f0f0f0"></div>
<div class="a" style="left:359px;top:201px;width:16px;height:126px;background:#cdcdcd"></div>
<svg width="20" height="20" style="left:357px;top:83px"><path d="M6 10.5 L9.5 7 L13 10.5" fill="none" stroke="#4d4d4d" stroke-width="2.2"/></svg>
<svg width="20" height="20" style="left:357px;top:324px"><path d="M6 9 L9.5 12.5 L13 9" fill="none" stroke="#4d4d4d" stroke-width="2.2"/></svg>
<div class="a" style="left:393px;top:59px;width:161px;height:314px;border:1px solid #dcdcdc"></div>
<div class="a" style="left:401px;top:58px;width:115px;height:3px;background:#fff"></div>
<div class="t" style="left:401px;top:56.20px;font-size:10.4px;">Price Level Color Bands</div>
<div class="a" style="left:403px;top:73px;width:90px;height:291px;background:#fff;border:1px solid #828790"></div>
<div class="a" style="left:425px;top:75px;width:1px;height:16px;background:#e8e8e8"></div>
<div class="a" style="left:452px;top:75px;width:1px;height:16px;background:#e8e8e8"></div>
<div class="a" style="left:426px;top:74px;width:26px;height:18px;overflow:hidden"><div class="t" style="left:-3px;top:4.9px;font-size:9.4px">BGD</div></div>
<div class="t" style="left:372px;width:200px;text-align:center;top:80.04px;font-size:9.4px;">Color</div>
<div class="a" style="left:404px;top:268px;width:22px;height:79px;background:#f0f0f0"></div>
<div class="a" style="left:425px;top:92px;width:1px;height:176px;background:#ececec"></div>
<div class="a" style="left:426px;top:93px;width:26px;height:15px;background:#c1ebd1"></div>
<div class="a" style="left:453px;top:93px;width:38px;height:15px;background:#007f00;outline:1px dotted #000;outline-offset:-1px"></div>
<div class="t" style="left:407.8px;top:97.11px;font-size:10.5px;;transform-origin:0 0;transform:scaleX(0.85)">1</div>
<div class="a" style="left:426px;top:109px;width:26px;height:15px;background:#ff1f1f"></div>
<div class="a" style="left:453px;top:109px;width:38px;height:15px;background:#000"></div>
<div class="t" style="left:407.8px;top:113.11px;font-size:10.5px;;transform-origin:0 0;transform:scaleX(0.85)">2</div>
<div class="a" style="left:426px;top:125px;width:26px;height:15px;background:#0a7aff"></div>
<div class="a" style="left:453px;top:125px;width:38px;height:15px;background:#000"></div>
<div class="t" style="left:407.8px;top:129.11px;font-size:10.5px;;transform-origin:0 0;transform:scaleX(0.85)">3</div>
<div class="a" style="left:426px;top:141px;width:26px;height:15px;background:#7b56a9"></div>
<div class="a" style="left:453px;top:141px;width:38px;height:15px;background:#000"></div>
<div class="t" style="left:407.8px;top:145.11px;font-size:10.5px;;transform-origin:0 0;transform:scaleX(0.85)">4</div>
<div class="a" style="left:426px;top:157px;width:26px;height:15px;background:#40f2f2"></div>
<div class="a" style="left:453px;top:157px;width:38px;height:15px;background:#000"></div>
<div class="t" style="left:407.8px;top:161.11px;font-size:10.5px;;transform-origin:0 0;transform:scaleX(0.85)">5</div>
<div class="a" style="left:426px;top:173px;width:26px;height:15px;background:#00be00"></div>
<div class="a" style="left:453px;top:173px;width:38px;height:15px;background:#000"></div>
<div class="t" style="left:407.8px;top:177.11px;font-size:10.5px;;transform-origin:0 0;transform:scaleX(0.85)">6</div>
<div class="a" style="left:426px;top:189px;width:26px;height:15px;background:#c21fc9"></div>
<div class="a" style="left:453px;top:189px;width:38px;height:15px;background:#000"></div>
<div class="t" style="left:407.8px;top:193.11px;font-size:10.5px;;transform-origin:0 0;transform:scaleX(0.85)">7</div>
<div class="a" style="left:426px;top:205px;width:26px;height:15px;background:#aca978"></div>
<div class="a" style="left:453px;top:205px;width:38px;height:15px;background:#000"></div>
<div class="t" style="left:407.8px;top:209.11px;font-size:10.5px;;transform-origin:0 0;transform:scaleX(0.85)">8</div>
<div class="a" style="left:426px;top:221px;width:26px;height:15px;background:#67b9a1"></div>
<div class="a" style="left:453px;top:221px;width:38px;height:15px;background:#000"></div>
<div class="t" style="left:407.8px;top:225.11px;font-size:10.5px;;transform-origin:0 0;transform:scaleX(0.85)">9</div>
<div class="a" style="left:426px;top:237px;width:26px;height:15px;background:#c09218"></div>
<div class="a" style="left:453px;top:237px;width:38px;height:15px;background:#000"></div>
<div class="t" style="left:407.8px;top:241.11px;font-size:10.5px;;transform-origin:0 0;transform:scaleX(0.97)">10</div>
<div class="a" style="left:426px;top:253px;width:26px;height:15px;background:#676767"></div>
<div class="a" style="left:453px;top:253px;width:38px;height:15px;background:#000"></div>
<div class="t" style="left:407.8px;top:257.11px;font-size:10.5px;;transform-origin:0 0;transform:scaleX(0.97)">11</div>
<div class="a" style="left:404px;top:347px;width:88px;height:16px;background:#f0f0f0"></div>
<div class="a" style="left:430px;top:347px;width:45px;height:16px;background:#cdcdcd"></div>
<svg width="20" height="20" style="left:402px;top:345px"><path d="M11.5 7 L8.5 10 L11.5 13" fill="none" stroke="#4d4d4d" stroke-width="2.2"/></svg>
<svg width="20" height="20" style="left:474px;top:345px"><path d="M8.5 7 L11.5 10 L8.5 13" fill="none" stroke="#4d4d4d" stroke-width="2.2"/></svg>
<div class="a" style="left:499px;top:73px;width:45px;height:290px;border:1px solid #dcdcdc"></div>
<div class="a" style="left:510px;top:157px;width:23px;height:21px;background:#e1e1e1;border:1px solid #adadad;"></div>
<div class="t" style="left:421.5px;width:200px;text-align:center;top:161.84px;font-size:12px;"></div>
<svg width="781" height="563"><path d="M518 168.5 H525 M521.5 165 V172" stroke="#000" stroke-width="1"/></svg>
<div class="a" style="left:510px;top:259px;width:23px;height:21px;background:#e1e1e1;border:1px solid #adadad;"></div>
<div class="t" style="left:420.5px;width:200px;text-align:center;top:263.69px;font-size:11px;">-</div>
<div class="a" style="left:563px;top:59px;width:181px;height:314px;border:1px solid #dcdcdc"></div>
<div class="a" style="left:572px;top:58px;width:97px;height:3px;background:#fff"></div>
<div class="t" style="left:572px;top:56.03px;font-size:10.6px;">Axes Color Settings</div>
<div class="a" style="left:573px;top:73px;width:110px;height:291px;background:#fff;border:1px solid #828790"></div>
<div class="a" style="left:612px;top:75px;width:1px;height:17px;background:#e8e8e8"></div>
<div class="a" style="left:651px;top:75px;width:1px;height:17px;background:#e8e8e8"></div>
<div class="t" style="left:493px;width:200px;text-align:center;top:80.04px;font-size:9.4px;">Axe</div>
<div class="t" style="left:532.5px;width:200px;text-align:center;top:80.04px;font-size:9.4px;transform:scaleX(0.9)">BGD</div>
<div class="a" style="left:652px;top:74px;width:30px;height:18px;overflow:hidden"><div class="t" style="left:9px;top:5.6px;font-size:9.6px">Color</div></div>
<div class="t" style="left:577px;top:96.03px;font-size:10.6px;">MSCO</div>
<div class="a" style="left:613px;top:93px;width:38px;height:15px;background:#000"></div>
<div class="a" style="left:652px;top:93px;width:30px;height:15px;background:#f2f000"></div>
<div class="a" style="left:575px;top:109px;width:37px;height:15px;background:#f3f3f3"></div>
<div class="t" style="left:577px;top:112.03px;font-size:10.6px;">LEHM</div>
<div class="a" style="left:613px;top:109px;width:38px;height:15px;background:#000"></div>
<div class="a" style="left:652px;top:109px;width:30px;height:15px;background:#e00000"></div>
<div class="t" style="left:577px;top:128.03px;font-size:10.6px;">BRMS</div>
<div class="a" style="left:613px;top:125px;width:38px;height:15px;background:#000"></div>
<div class="a" style="left:652px;top:125px;width:30px;height:15px;background:#00d800"></div>
<div class="a" style="left:575px;top:141px;width:37px;height:15px;background:#f3f3f3"></div>
<div class="t" style="left:577px;top:144.03px;font-size:10.6px;">GETC</div>
<div class="a" style="left:613px;top:141px;width:38px;height:15px;background:#000"></div>
<div class="a" style="left:652px;top:141px;width:30px;height:15px;background:#ee82ee"></div>
<div class="t" style="left:577px;top:159.27px;font-size:11.5px;font-weight:bold;transform-origin:0 0;transform:scaleX(1.08)">TIMB</div>
<div class="a" style="left:613px;top:157px;width:38px;height:15px;background:#000"></div>
<div class="a" style="left:652px;top:157px;width:30px;height:15px;background:#00ffff"></div>
<div class="a" style="left:574px;top:347px;width:108px;height:16px;background:#f0f0f0"></div>
<div class="a" style="left:591px;top:347px;width:68px;height:16px;background:#cdcdcd"></div>
<svg width="20" height="20" style="left:572px;top:345px"><path d="M11.5 7 L8.5 10 L11.5 13" fill="none" stroke="#4d4d4d" stroke-width="2.2"/></svg>
<svg width="20" height="20" style="left:664px;top:345px"><path d="M8.5 7 L11.5 10 L8.5 13" fill="none" stroke="#4d4d4d" stroke-width="2.2"/></svg>
<div class="a" style="left:689px;top:73px;width:45px;height:290px;border:1px solid #dcdcdc"></div>
<div class="a" style="left:700px;top:131px;width:23px;height:21px;background:#e1e1e1;border:1px solid #adadad;border:2px solid #0078d7"></div>
<div class="t" style="left:611.5px;width:200px;text-align:center;top:135.84px;font-size:12px;"></div>
<svg width="781" height="563"><path d="M708 142.5 H715 M711.5 139 V146" stroke="#000" stroke-width="1"/></svg>
<div class="a" style="left:700px;top:207px;width:23px;height:21px;background:#e1e1e1;border:1px solid #adadad;"></div>
<div class="t" style="left:610.5px;width:200px;text-align:center;top:211.69px;font-size:11px;">-</div>
<div class="a" style="left:700px;top:283px;width:23px;height:21px;background:#e1e1e1;border:1px solid #adadad;"></div>
<div class="t" style="left:610.5px;width:200px;text-align:center;top:288.69px;font-size:11px;">x</div>
<div class="a" style="left:53px;top:386px;width:291px;height:74px;border:1px solid #dcdcdc"></div>
<div class="a" style="left:62px;top:385px;width:71px;height:3px;background:#fff"></div>
<div class="t" style="left:62px;top:381.86px;font-size:10.8px;">Other Options</div>
<div class="t" style="left:62.5px;top:418.28px;font-size:10.3px;">Grid Line Color</div>
<div class="a" style="left:149px;top:410px;width:32px;height:20px;background:#a0a0a0"></div>
<div class="a" style="left:149px;top:410px;width:31px;height:19px;background:#fff"></div>
<div class="a" style="left:150px;top:411px;width:30px;height:18px;background:#d2691e"></div>
<div class="t" style="left:208.5px;top:417.03px;font-size:10.6px;">Header</div>
<div class="t" style="left:267px;top:398.17px;font-size:10.2px;">Back</div>
<div class="t" style="left:307.5px;top:396.10px;font-size:11.7px;">Text</div>
<div class="a" style="left:263px;top:410px;width:32px;height:20px;background:#a0a0a0"></div>
<div class="a" style="left:263px;top:410px;width:31px;height:19px;background:#fff"></div>
<div class="a" style="left:264px;top:411px;width:30px;height:18px;background:#d3d3d3"></div>
<div class="a" style="left:303px;top:410px;width:32px;height:20px;background:#a0a0a0"></div>
<div class="a" style="left:303px;top:410px;width:31px;height:19px;background:#fff"></div>
<div class="a" style="left:304px;top:411px;width:30px;height:18px;background:#000"></div>
<div class="t" style="left:183.5px;top:443.03px;font-size:10.6px;">Background</div>
<div class="a" style="left:263px;top:436px;width:32px;height:20px;background:#a0a0a0"></div>
<div class="a" style="left:263px;top:436px;width:31px;height:19px;background:#fff"></div>
<div class="a" style="left:264px;top:437px;width:30px;height:18px;background:#808080"></div>
<div class="a" style="left:353px;top:386px;width:181px;height:74px;border:1px solid #dcdcdc"></div>
<div class="a" style="left:361px;top:385px;width:68px;height:3px;background:#fff"></div>
<div class="t" style="left:361px;top:382.03px;font-size:10.6px;">Level1 Colors</div>
<div class="t" style="left:437px;top:398.17px;font-size:10.2px;">Back</div>
<div class="t" style="left:477px;top:396.10px;font-size:11.7px;">Text</div>
<div class="t" style="left:362px;top:416.86px;font-size:10.8px;">Up Tick</div>
<div class="t" style="left:362px;top:442.86px;font-size:10.8px;">Down Tick</div>
<div class="a" style="left:433px;top:410px;width:32px;height:20px;background:#a0a0a0"></div>
<div class="a" style="left:433px;top:410px;width:31px;height:19px;background:#fff"></div>
<div class="a" style="left:434px;top:411px;width:30px;height:18px;background:#008000"></div>
<div class="a" style="left:473px;top:410px;width:32px;height:20px;background:#a0a0a0"></div>
<div class="a" style="left:473px;top:410px;width:31px;height:19px;background:#fff"></div>
<div class="a" style="left:474px;top:411px;width:30px;height:18px;background:#000"></div>
<div class="a" style="left:433px;top:436px;width:32px;height:20px;background:#a0a0a0"></div>
<div class="a" style="left:433px;top:436px;width:31px;height:19px;background:#fff"></div>
<div class="a" style="left:434px;top:437px;width:30px;height:18px;background:#ff0000"></div>
<div class="a" style="left:473px;top:436px;width:32px;height:20px;background:#a0a0a0"></div>
<div class="a" style="left:473px;top:436px;width:31px;height:19px;background:#fff"></div>
<div class="a" style="left:474px;top:437px;width:30px;height:18px;background:#000"></div>
<div class="a" style="left:543px;top:386px;width:201px;height:74px;border:1px solid #dcdcdc"></div>
<div class="a" style="left:552px;top:385px;width:89px;height:3px;background:#fff"></div>
<div class="t" style="left:552px;top:382.03px;font-size:10.6px;">Order Highlighting</div>
<div class="a" style="left:553px;top:404px;width:13px;height:13px;background:#fff;border:1px solid #333"></div>
<div class="t" style="left:569.5px;top:405.82px;font-size:10.85px;">Highlight Accepted Orders</div>
<div class="t" style="left:627px;top:424.87px;font-size:10.2px;">Back</div>
<div class="t" style="left:667px;top:423.10px;font-size:11.7px;">Text</div>
<div class="t" style="left:552.5px;top:443.03px;font-size:10.6px;">Order Color</div>
<div class="a" style="left:623px;top:436px;width:32px;height:20px;background:#a0a0a0"></div>
<div class="a" style="left:623px;top:436px;width:31px;height:19px;background:#fff"></div>
<div class="a" style="left:624px;top:437px;width:30px;height:18px;background:#000"></div>
<div class="a" style="left:663px;top:436px;width:32px;height:20px;background:#a0a0a0"></div>
<div class="a" style="left:663px;top:436px;width:31px;height:19px;background:#fff"></div>
<div class="a" style="left:664px;top:437px;width:30px;height:18px;background:#fff"></div>
<div class="a" style="left:31px;top:481px;width:731px;height:70px;border:1px solid #dcdcdc"></div>
<div class="a" style="left:372px;top:492px;width:114px;height:21px;background:#e1e1e1;border:1px solid #adadad;"></div>
<div class="t" style="left:328.0px;width:200px;text-align:center;top:497.86px;font-size:10.8px;">Load Default</div>
<div class="a" style="left:500px;top:492px;width:113px;height:21px;background:#e1e1e1;border:1px solid #adadad;"></div>
<div class="t" style="left:455.5px;width:200px;text-align:center;top:497.86px;font-size:10.8px;">Save as Default</div>
<div class="a" style="left:627px;top:492px;width:114px;height:21px;background:#e1e1e1;border:1px solid #adadad;"></div>
<div class="t" style="left:583.0px;width:200px;text-align:center;top:497.86px;font-size:10.8px;">Apply</div>
<div class="a" style="left:499px;top:526px;width:115px;height:23px;background:#e1e1e1;border:1px solid #adadad;border:1px solid #ff0000;box-shadow:inset 0 0 0 1px #a8bcbc"></div>
<div class="t" style="left:455.5px;width:200px;text-align:center;top:532.86px;font-size:10.8px;">OK</div>
<div class="a" style="left:627px;top:527px;width:114px;height:21px;background:#e1e1e1;border:1px solid #adadad;"></div>
<div class="t" style="left:583.0px;width:200px;text-align:center;top:532.86px;font-size:10.8px;">Cancel</div>
</body></html>
